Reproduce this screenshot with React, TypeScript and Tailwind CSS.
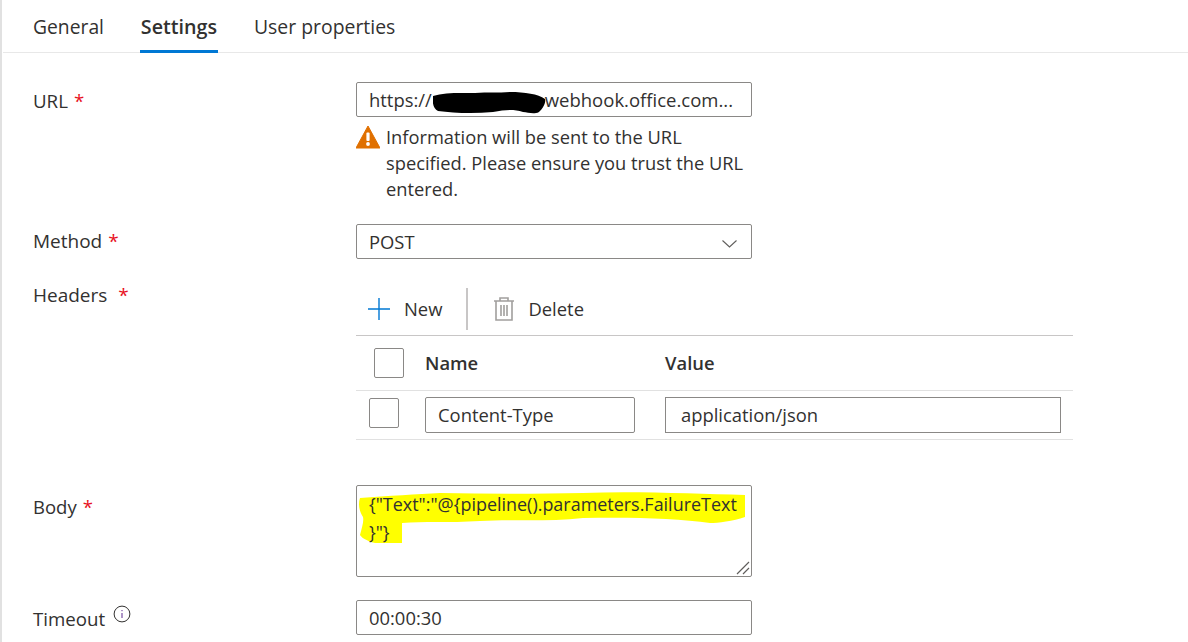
const inputClass = "flex items-center h-[35px] border border-[#8a8886] rounded-[2px] bg-white px-3 text-[18.4px] text-[#323130]";

function FieldLabel({ text, star, starGap, className }: { text: string; star?: boolean; starGap?: string; className?: string }) {
	return (
		<div className={`w-[323px] shrink-0 leading-[26px] font-medium text-[#323130] ${className ?? ""}`}>
			{text}
			{star && <span className={`${starGap ?? "ml-[6px]"} text-[#e81123]`}>*</span>}
		</div>
	);
}

function Checkbox({ className }: { className?: string }) {
	return <div className={`w-[30px] h-[30px] shrink-0 border border-[#8a8886] rounded-[2px] bg-white ${className ?? ""}`} />;
}

export default function App() {
	return (
		<div className="w-[1188px] h-[642px] overflow-hidden bg-white border-l-2 border-[#e1e1e1] font-['Open_Sans',sans-serif]">
			<div className="flex h-[53px] ml-px border-b border-[#e8e8e8] pl-[30px] gap-[36px] text-[19.3px] text-[#323130]">
				<div className="pt-[14px] leading-[26px]">General</div>
				<div className="pt-[14px] leading-[26px] text-[19.7px] font-semibold border-b-[3px] border-[#0078d4] h-[53px] w-[78px] text-center whitespace-nowrap">Settings</div>
				<div className="pt-[14px] leading-[26px] text-[19.4px]">User properties</div>
			</div>

			<div className="pl-[31px]">
				<div className="flex pt-[29px]">
					<FieldLabel text="URL" star className="text-[18.7px] pt-[6px]" />
					<div className="w-[396px]">
						<div className={`${inputClass} relative whitespace-nowrap`}>
							<span>https://</span>
							<span className="ml-[113px] text-[18.5px]">webhook.office.com...</span>
							<svg className="absolute left-[76px] top-[6px]" width="114" height="27" viewBox="0 0 114 27">
								<path d="M0 7 C 12 3 30 4 42 4 C 55 3 65 4 77 3 C 92 3 105 5 112 10 C 113 14 110 19 106 23 C 100 26 95 23 90 23 C 80 20 72 21 60 23 C 40 25 20 24 5 22 C 0 20 -1 12 0 7 Z" fill="#000" />
							</svg>
						</div>
						<div className="flex mt-[7px] text-[18.3px] leading-[26px] text-[#323130]">
							<svg className="shrink-0 mt-[1px]" width="24" height="24" viewBox="0 0 24 24">
								<path d="M12 1 L24 23 H0 Z" fill="#e07000" stroke="#e07000" strokeWidth="1" strokeLinejoin="round" />
								<rect x="10.4" y="7.5" width="3.2" height="8.5" rx="1" fill="#fff" />
								<circle cx="12" cy="19" r="1.9" fill="#fff" />
							</svg>
							<div className="ml-[6px] w-[366px]">Information will be sent to the URL specified. Please ensure you trust the URL entered.</div>
						</div>
					</div>
				</div>

				<div className="flex mt-[22px]">
					<FieldLabel text="Method" star className="text-[19px] pt-[4px]" />
					<div className={`${inputClass} w-[396px] justify-between`}>
						<span>POST</span>
						<svg className="mt-[5px] mr-[2px]" width="15" height="8" viewBox="0 0 15 8" fill="none" stroke="#605e5c" strokeWidth="1.1">
							<path d="M0.5 0.5 L7.5 7 L14.5 0.5" />
						</svg>
					</div>
				</div>

				<div className="flex mt-[23px]">
					<FieldLabel text="Headers" star starGap="ml-[11px]" className="text-[19px]" />
					<div className="w-[717px]">
						<div className="flex items-center h-[54px] border-b border-[#c8c6c6] text-[18.4px] text-[#323130]">
							<svg className="ml-[11px]" width="24" height="24" viewBox="0 0 24 24">
								<path d="M12 1 V23 M1 12 H23" stroke="#0078d4" strokeWidth="1.4" fill="none" />
							</svg>
							<span className="ml-[13px]">New</span>
							<div className="ml-[24px] w-[2px] h-[42px] bg-[#c8c6c6]" />
							<svg className="ml-[25px]" width="22" height="26" viewBox="0 0 22 26" fill="none" stroke="#a19f9d" strokeWidth="1.6">
								<path d="M1 5 H21 M7 5 V2 H15 V5" />
								<path d="M3 5 V24 H19 V5" />
								<path d="M8 9 V20 M11 9 V20 M14 9 V20" />
							</svg>
							<span className="ml-[13px]">Delete</span>
						</div>
						<div className="flex items-center h-[55px] border-b border-[#e1e1e1] text-[18.4px] font-semibold text-[#323130]">
							<Checkbox className="ml-[18px]" />
							<div className="ml-[21px] w-[240px]">Name</div>
							<div>Value</div>
						</div>
						<div className="flex items-center h-[49px] border-b border-[#e1e1e1]">
							<Checkbox className="ml-[13px] mb-[5px]" />
							<div className={`${inputClass} ml-[26px] w-[210px] !h-[36px]`}>Content-Type</div>
							<div className={`${inputClass} ml-[30px] w-[396px] !h-[36px] !px-[15px] !rounded-none`}>application/json</div>
						</div>
					</div>
				</div>

				<div className="flex mt-[45px]">
					<FieldLabel text="Body" star className="text-[18.5px] pt-[9px]" />
					<div className="relative w-[396px] h-[92px] border border-[#8a8886] rounded-[2px] bg-white">
						<svg className="absolute left-[1px] top-[5px]" width="392" height="56" viewBox="0 0 392 56">
							<path d="M2 7 C 30 5 60 3 82 2 C 130 3 180 3 225 2 C 280 0 340 3 387 4 L387 26 C 375 30 360 32 352 32 C 320 27 270 26 225 27 C 190 31 150 28 122 30 C 90 32 65 30 44 32 L44 52 L17 52 C 8 50 3 46 2 44 C 4 36 6 30 5 26 C 1 20 0 13 2 7 Z" fill="#ffff00" />
						</svg>
						<div className="relative px-3 pt-[4px] text-[17.95px] leading-[28px] text-[#323130] whitespace-nowrap">
							{'{"Text":"@{pipeline().parameters.FailureText'}
							<br />
							{'}"}'}
						</div>
						<svg className="absolute right-[1px] bottom-[1px]" width="14" height="14" viewBox="0 0 14 14" stroke="#605e5c" strokeWidth="1.2">
							<path d="M1 13 L13 1 M7 13 L13 7" />
						</svg>
					</div>
				</div>

				<div className="flex mt-[23px]">
					<div className="w-[323px] shrink-0 flex text-[18.7px] font-medium leading-[26px] text-[#323130] pt-[6px]">
						Timeout
						<svg className="ml-[8px] mt-[-1px]" width="18" height="18" viewBox="0 0 18 18" fill="none">
							<circle cx="9" cy="9" r="7.9" stroke="#323130" strokeWidth="1" />
							<path d="M9 8 V13 M9 5 V6.2" stroke="#5c2d91" strokeWidth="1" />
						</svg>
					</div>
					<div className={`${inputClass} w-[396px]`}>00:00:30</div>
				</div>
			</div>
		</div>
	);
}
